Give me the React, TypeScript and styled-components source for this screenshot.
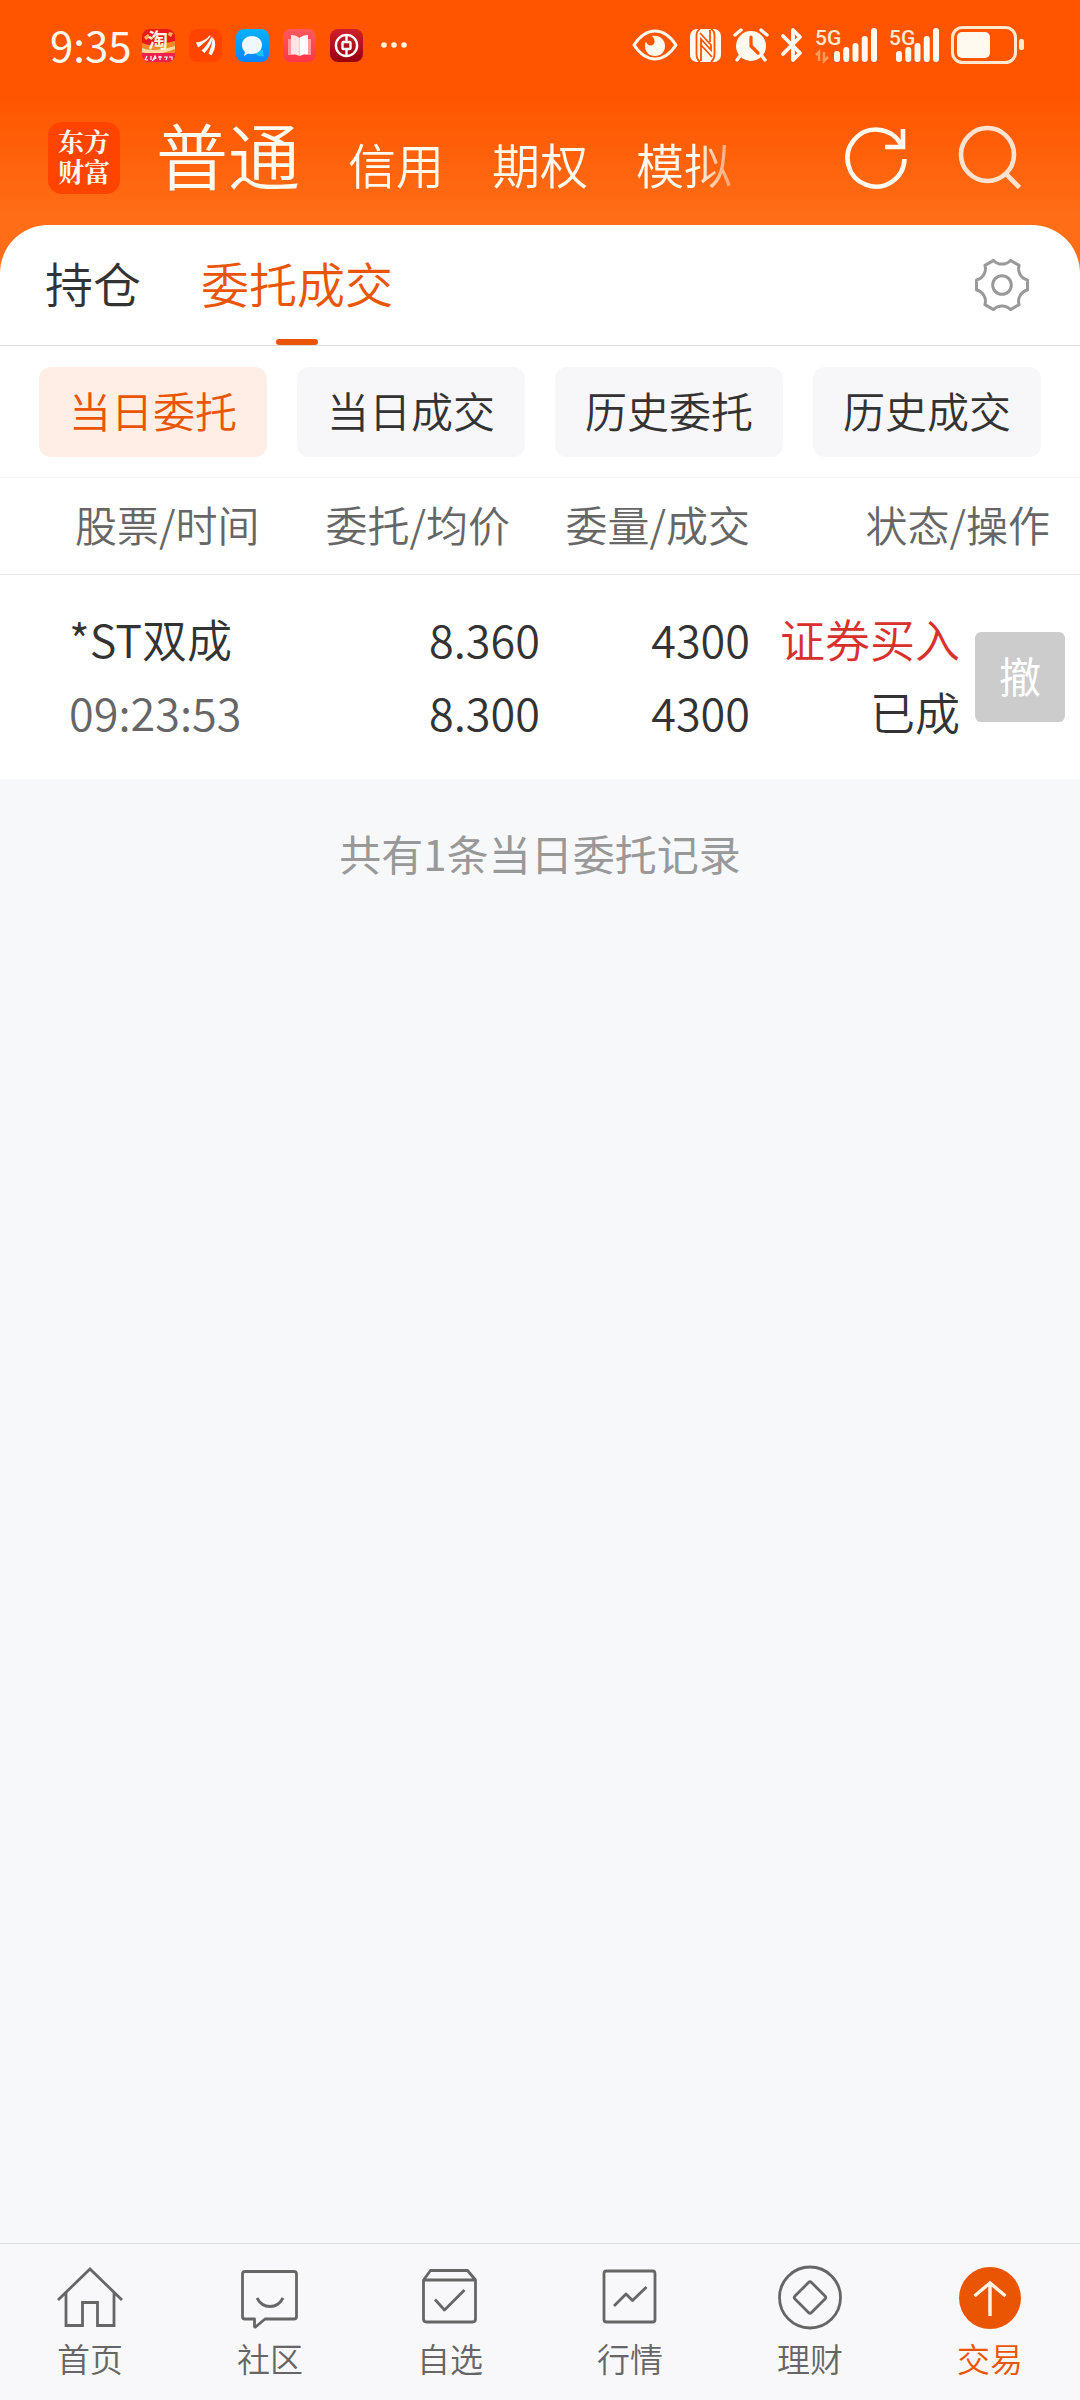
import React from 'react';
import styled, { createGlobalStyle } from 'styled-components';

const color = {
  brand: '#ea5504',
  ink: '#333333',
  sub: '#666666',
  hint: '#999999',
  buy: '#d9302c',
  page: '#f7f8fa',
  chip: '#f7f7fa',
  line: '#dddddd',
};

const GlobalStyle = createGlobalStyle`
  *, *::before, *::after { box-sizing: border-box; }
  body {
    margin: 0;
    background: ${color.page};
    color: ${color.ink};
    font-family: "Noto Sans CJK SC", "Noto Sans", sans-serif;
    font-weight: 350;
  }
  button {
    margin: 0;
    padding: 0;
    border: 0;
    background: none;
    color: inherit;
    font: inherit;
    cursor: pointer;
  }
  a { color: inherit; text-decoration: none; }
  svg { display: block; flex: none; overflow: visible; }
`;

const Shell = styled.div`
  min-height: 100vh;
  display: flex;
  flex-direction: column;
`;

const Hero = styled.header`
  background: linear-gradient(#ff5500 0, #ff5500 96px, #ff6e17 220px);
`;

const StatusBar = styled.div`
  height: 90px;
  padding: 0 56px 0 50px;
  display: flex;
  align-items: center;
  justify-content: space-between;
  color: #fffaf0;
`;

const StatusGroup = styled.div<{ $gap: number }>`
  display: flex;
  align-items: center;
  gap: ${(p) => p.$gap}px;
`;

const Clock = styled.time`
  font-size: 42px;
  line-height: 48px;
  padding-bottom: 3px;
  font-weight: 400;
  margin-right: -4px;
`;

const AccountBar = styled.div`
  height: 135px;
  padding: 0 57px 0 48px;
  display: flex;
  align-items: center;
  color: #fffaf0;
`;

const Logo = styled.a`
  flex: none;
  width: 72px;
  height: 72px;
  margin-right: 36px;
  padding-bottom: 3px;
  border-radius: 14px;
  background: #ff4400;
  display: grid;
  place-content: center;
  text-align: center;
  font-size: 26px;
  line-height: 30px;
  font-weight: 700;
  font-family: "Noto Serif CJK SC", "Noto Sans CJK SC", sans-serif;
`;

const AccountTabs = styled.nav`
  flex: 1;
  display: flex;
  align-items: baseline;
  gap: 48px;
  white-space: nowrap;
  mask-image: linear-gradient(to right, #000 540px, transparent 600px);
`;

const AccountTab = styled.button<{ $active?: boolean }>`
  font-size: ${(p) => (p.$active ? 72 : 48)}px;
  line-height: 72px;
`;

const Actions = styled.div`
  display: flex;
  gap: 48px;
`;

const SectionBar = styled.div`
  height: 121px;
  padding: 0 51px 0 45px;
  display: flex;
  align-items: center;
  background: #ffffff;
  border-radius: 48px 48px 0 0;
  border-bottom: 1px solid ${color.line};
`;

const SectionTabs = styled.nav`
  flex: 1;
  align-self: stretch;
  display: flex;
  gap: 60px;
`;

const SectionTab = styled.button<{ $active?: boolean }>`
  position: relative;
  font-size: 48px;
  line-height: 72px;
  padding-bottom: 6px;
  color: ${(p) => (p.$active ? color.brand : color.ink)};

  &::after {
    content: "";
    display: ${(p) => (p.$active ? 'block' : 'none')};
    position: absolute;
    left: calc(50% - 21px);
    bottom: 0;
    width: 42px;
    height: 6px;
    border-radius: 3px;
    background: ${color.brand};
  }
`;

const Filters = styled.div`
  display: grid;
  grid-template-columns: repeat(4, 1fr);
  gap: 30px;
  padding: 21px 39px 20px;
  background: #ffffff;
  border-bottom: 1px solid #f6f6f6;
`;

const Filter = styled.button<{ $active?: boolean }>`
  height: 90px;
  padding-bottom: 4px;
  border-radius: 12px;
  font-size: 42px;
  line-height: 60px;
  color: ${(p) => (p.$active ? color.brand : color.ink)};
  background: ${(p) => (p.$active ? '#ffeee6' : color.chip)};
`;

const Orders = styled.table`
  width: 100%;
  table-layout: fixed;
  border-collapse: separate;
  border-spacing: 0;
  background: #ffffff;
`;

const HeadCell = styled.th<{ $align?: 'left' | 'right'; $start?: number; $end?: number }>`
  height: 97px;
  padding: 0 ${(p) => p.$end ?? 0}px 4px ${(p) => p.$start ?? 0}px;
  border-bottom: 1px solid #ebebeb;
  text-align: ${(p) => p.$align ?? 'right'};
  font-size: 42px;
  line-height: 60px;
  font-weight: 350;
  color: ${color.sub};
  white-space: nowrap;
`;

const Cell = styled.td<{ $align?: 'left' | 'right'; $start?: number }>`
  height: 204px;
  padding: 0 0 4px ${(p) => p.$start ?? 0}px;
  text-align: ${(p) => p.$align ?? 'right'};
  white-space: nowrap;
`;

const Line = styled.div<{ $color?: string }>`
  font-size: 45px;
  line-height: 73px;
  color: ${(p) => p.$color ?? color.ink};
`;

const ActionCell = styled.td`
  padding: 0 15px;
`;

const CancelButton = styled.button`
  display: block;
  width: 90px;
  height: 90px;
  padding-bottom: 4px;
  border-radius: 6px;
  background: #cccccc;
  color: #ffffff;
  font-size: 42px;
  line-height: 60px;
  font-weight: 400;
`;

const Summary = styled.p`
  margin: 0;
  padding: 44px 0;
  text-align: center;
  font-size: 42px;
  line-height: 60px;
  font-weight: 400;
  color: ${color.hint};
`;

const BottomNav = styled.nav`
  position: sticky;
  bottom: 0;
  margin-top: auto;
  display: grid;
  grid-template-columns: repeat(6, 1fr);
  padding: 21px 0 24px;
  border-top: 1px solid ${color.line};
  background: #f8f8fa;
`;

const NavItem = styled.a<{ $active?: boolean }>`
  display: flex;
  flex-direction: column;
  align-items: center;
  gap: 9px;
  font-size: 33px;
  line-height: 36px;
  color: ${(p) => (p.$active ? color.brand : color.sub)};
`;

/* ---------- status bar drawings ---------- */

const AppIcon = ({ fill, children }: { fill: string; children: React.ReactNode }) => (
  <svg width="33" height="33" viewBox="0 0 33 33" aria-hidden="true">
    <rect width="33" height="33" rx="8" fill={fill} />
    {children}
  </svg>
);

const AppIcons = () => (
  <>
    <svg width="33" height="33" viewBox="0 0 33 33" aria-hidden="true">
      <defs>
        <clipPath id="tile"><rect width="33" height="33" rx="8" /></clipPath>
        <linearGradient id="chat" x1="0" y1="0" x2="0" y2="1">
          <stop offset="0" stopColor="#06b2ff" /><stop offset="1" stopColor="#0a84ff" />
        </linearGradient>
        <linearGradient id="book" x1="0" y1="0" x2="0" y2="1">
          <stop offset="0" stopColor="#ff5a5f" /><stop offset="1" stopColor="#fb3645" />
        </linearGradient>
        <linearGradient id="bank" x1="0" y1="0" x2="0" y2="1">
          <stop offset="0" stopColor="#d0202c" /><stop offset="1" stopColor="#98000e" />
        </linearGradient>
      </defs>
      <g clipPath="url(#tile)">
        <rect width="33" height="33" fill="#ea1a1c" />
        <path d="M0 14q8 3 14 2t19-4v13H0z" fill="#f98a2a" />
        <path d="M0 19q10 5 33-2v3q-20 8-33 3z" fill="#ffd9a0" />
        <path d="M2 8l4-3 2 3-4 3zM27 3l4 1-2 4-3-2z" fill="#ffb45a" />
        <rect y="24" width="33" height="9" fill="#f0204e" />
        <path d="M5 27l-2 4h3M9 27v4M13 27l-2 4 3-2zM16 28h4M18 27v4M22 28h3l-1 3M27 28h3v3" stroke="#fff" strokeWidth="1.2" fill="none" />
      </g>
      <text x="16" y="19" textAnchor="middle" fontSize="20" fontWeight="700" fill="#fff3dc">淘</text>
    </svg>
    <AppIcon fill="#ff4400">
      <path d="M7 13.500q9-1 14-7.500 1 1 0 2-4 5-12 10.500zM12.500 21.500q6-5 10-14 1 2 .5 4-2 7-7.500 12.500zM19.500 24.500q4-8 4-17 6 8-1 19z" fill="#fff" />
    </AppIcon>
    <AppIcon fill="url(#chat)">
      <path d="M20 21h7v3l1 3q-6 1-8-2z" fill="#12c4ff" />
      <path d="M16 7c6 0 10 4 10 9s-4 9-10 9c-2 0-3 0-4-.6L8 27l1-4c-2-2-3-4-3-7 0-5 4-9 10-9z" fill="#eef9ff" />
    </AppIcon>
    <AppIcon fill="url(#book)">
      <path d="M5 10h6v16H5zM22 10h6v16h-6z" fill="#ff9a9c" />
      <path d="M8 6q5 0 8.500 3v18q-4-2-8.500-2z" fill="#ffe4e4" />
      <path d="M25 6q-5 0-8.500 3v18q4-2 8.500-2z" fill="#fff" />
    </AppIcon>
    <AppIcon fill="url(#bank)">
      <g stroke="#fff" fill="none" strokeWidth="2.400">
        <circle cx="16.500" cy="16.500" r="10.600" />
        <rect x="12.500" y="13" width="8" height="7" rx="1" />
        <path d="M16.500 6v7M16.500 20v7" />
      </g>
    </AppIcon>
    <svg width="36" height="6" viewBox="-4 0 36 6" aria-hidden="true">
      <g fill="#fff3e0"><circle cx="3" cy="3" r="2.800" /><circle cx="13" cy="3" r="2.800" /><circle cx="23" cy="3" r="2.800" /></g>
    </svg>
  </>
);

const EyeIcon = () => (
  <svg width="46" height="32" viewBox="0 0 46 32" aria-hidden="true">
    <path d="M2 16C8 7 15 2 23 2s15 5 21 14c-6 9-13 14-21 14S8 25 2 16z" fill="none" stroke="currentColor" strokeWidth="3" strokeLinejoin="round" />
    <path d="M20 7c7-1 13 3 13 10 0 6-4 10-10 10s-10-4-10-10c0-2 .4-3.500 1-4.500 1 3 3 4.500 5.500 4 4-1 4-6 .5-9.500z" fill="currentColor" />
  </svg>
);

const NfcIcon = () => (
  <svg width="31" height="33" viewBox="0 0 31 33" aria-hidden="true">
    <rect width="31" height="33" rx="7" fill="currentColor" />
    <g fill="none" stroke="#ff5500" strokeWidth="1.800">
      <path d="M10 0Q6 2 6.500 8v17q0 5 3.500 8" />
      <path d="M21 0q4 2 3.500 8v17q0 5-3.500 8" />
      <path d="M11 32V10l10 11v-5L10 4M20 1v12" />
      <path d="M11 16l11 12" />
    </g>
  </svg>
);

const AlarmIcon = () => (
  <svg width="36" height="34" viewBox="0 0 36 34" aria-hidden="true">
    <circle cx="18" cy="18" r="15" fill="currentColor" />
    <path d="M2 7l6-5M34 7l-6-5M7 28l-3 4M29 28l3 4" stroke="currentColor" strokeWidth="3.400" strokeLinecap="round" />
    <path d="M18 9v9l7 7" stroke="#ff5500" strokeWidth="3.200" fill="none" strokeLinecap="round" />
  </svg>
);

const BluetoothIcon = () => (
  <svg width="22" height="36" viewBox="0 0 22 36" aria-hidden="true">
    <path d="M2 9l17 17-7 7V3l7 7L2 27" fill="none" stroke="currentColor" strokeWidth="3.800" strokeLinejoin="round" strokeLinecap="round" />
  </svg>
);

const barHeights = [11, 15, 19, 26, 34];

const SignalIcon = ({ width, traffic }: { width: number; traffic?: boolean }) => (
  <svg width={width} height="36" viewBox={`0 0 ${width} 36`} role="img" aria-label="5G">
    <text x="0" y="18" fontFamily="Roboto, sans-serif" fontSize="21" fontWeight="500" fill="#ffe9d0">5G</text>
    {traffic && <path d="M4 34V25l-3 3M9 25v9l4-4" stroke="#ff9a5c" strokeWidth="2.500" fill="none" />}
    {barHeights.map((h, i) => (
      <rect key={h} x={width - 43 + i * 9.250} y={35 - h} width="6" height={h} rx="3" fill="currentColor" />
    ))}
  </svg>
);

const BatteryIcon = () => (
  <svg width="73" height="38" viewBox="0 0 73 38" aria-hidden="true">
    <rect x="1.500" y="1.500" width="63" height="35" rx="10" fill="none" stroke="#ffe9d0" strokeWidth="3" />
    <rect x="6" y="6" width="33" height="26" rx="5" fill="currentColor" />
    <rect x="68" y="13" width="5" height="11" rx="2" fill="#ffe9d0" />
  </svg>
);

/* ---------- toolbar drawings ---------- */

const RefreshIcon = () => (
  <svg width="66" height="66" viewBox="0 0 66 66" fill="none" stroke="currentColor" strokeWidth="4.600" aria-hidden="true">
    <path d="M61.500 34A28.500 28.500 0 1 1 57.500 18.500L60 22" />
    <path d="M60 4v18H42" />
  </svg>
);

const SearchIcon = () => (
  <svg width="66" height="66" viewBox="0 0 66 66" fill="none" stroke="#ffe3d0" strokeWidth="4.600" aria-hidden="true">
    <circle cx="30.500" cy="29.500" r="26.500" />
    <path d="M48.500 48.500l14 14" />
  </svg>
);

const gearPath = (() => {
  const spot = (x: number, y: number, turn: number) => {
    const c = Math.cos(turn);
    const s = Math.sin(turn);
    return `${(27 + x * c - y * s).toFixed(2)} ${(27 + x * s + y * c).toFixed(2)}`;
  };
  let d = '';
  for (let i = 0; i < 6; i += 1) {
    const turn = (i * Math.PI) / 3;
    d += `${i === 0 ? 'M' : 'A11.5 11.5 0 0 0 '}${spot(25.5, -5, turn)}L${spot(25.5, 5, turn)}`;
  }
  return `${d}A11.5 11.5 0 0 0 ${spot(25.5, -5, 0)}Z`;
})();

const GearIcon = () => (
  <svg width="54" height="54" viewBox="0 0 54 54" fill="none" stroke={color.hint} strokeWidth="3" strokeLinejoin="round" aria-hidden="true">
    <path d={gearPath} />
    <circle cx="27" cy="27" r="9.300" />
  </svg>
);

/* ---------- bottom navigation drawings ---------- */

const NavIcon = ({ children }: { children: React.ReactNode }) => (
  <svg width="66" height="66" viewBox="0 0 66 66" fill="none" stroke="currentColor" strokeWidth="2.800" strokeLinejoin="round" aria-hidden="true">
    {children}
  </svg>
);

const navItems = [
  {
    label: '首页',
    icon: <path d="M1 35L33 4l32 31M9 28v32.500h16.500V37.500h15v23H57V28" strokeLinejoin="miter" />,
  },
  {
    label: '社区',
    icon: (
      <>
        <path d="M8 6.500h49q2.500 0 2.500 2.500v42.500q0 2.500-2.500 2.500H28l-9.500 8q-1 .5-1-1V54H8q-2.500 0-2.500-2.500V9q0-2.500 2.500-2.500z" />
        <path d="M20 33q4.500 8.500 13 8.500T46 33" />
      </>
    ),
  },
  {
    label: '自选',
    icon: (
      <>
        <path d="M6.500 15l7-9.500h37l8 9.500v39q0 3-3 3h-46q-3 0-3-3zM6.500 15h52" />
        <path d="M18 34.500L27.500 45 47.500 25" />
      </>
    ),
  },
  {
    label: '行情',
    icon: (
      <>
        <rect x="7" y="6" width="51" height="51" rx="2.500" />
        <path d="M17 41l12-12 6.500 6.500L49.500 22" />
      </>
    ),
  },
  {
    label: '理财',
    icon: (
      <>
        <circle cx="33" cy="32.500" r="30.500" />
        <path d="M31.500 17.500q1.500-1.500 3 0l13.500 13.500q1.500 1.500 0 3L34.500 47.500q-1.500 1.500-3 0L18 34q-1.500-1.500 0-3z" />
      </>
    ),
  },
  {
    label: '交易',
    active: true,
    icon: (
      <>
        <circle cx="33" cy="33" r="31" fill={color.brand} stroke="none" />
        <path d="M17.500 31L33 18l15.500 13M33 18v33" stroke="#fff4e4" strokeWidth="3.400" strokeLinejoin="miter" />
      </>
    ),
  },
];

const accounts = ['普通', '信用', '期权', '模拟'];
const sections = ['持仓', '委托成交'];
const filters = ['当日委托', '当日成交', '历史委托', '历史成交'];

const orders = [
  {
    name: '*ST双成',
    time: '09:23:53',
    price: '8.360',
    average: '8.300',
    amount: '4300',
    filled: '4300',
    side: '证券买入',
    status: '已成',
  },
];

export default function App() {
  return (
    <>
      <GlobalStyle />
      <Shell>
        <Hero>
          <StatusBar>
            <StatusGroup $gap={14}>
              <Clock>9:35</Clock>
              <AppIcons />
            </StatusGroup>
            <StatusGroup $gap={12}>
              <EyeIcon />
              <NfcIcon />
              <AlarmIcon />
              <BluetoothIcon />
              <SignalIcon width={62} traffic />
              <SignalIcon width={50} />
              <BatteryIcon />
            </StatusGroup>
          </StatusBar>
          <AccountBar>
            <Logo href="#home">东方<br />财富</Logo>
            <AccountTabs>
              {accounts.map((name, i) => (
                <AccountTab key={name} type="button" $active={i === 0}>{name}</AccountTab>
              ))}
            </AccountTabs>
            <Actions>
              <button type="button" aria-label="刷新"><RefreshIcon /></button>
              <button type="button" aria-label="搜索"><SearchIcon /></button>
            </Actions>
          </AccountBar>
          <SectionBar>
            <SectionTabs>
              {sections.map((name, i) => (
                <SectionTab key={name} type="button" $active={i === 1}>{name}</SectionTab>
              ))}
            </SectionTabs>
            <button type="button" aria-label="设置"><GearIcon /></button>
          </SectionBar>
        </Hero>

        <main>
          <Filters>
            {filters.map((name, i) => (
              <Filter key={name} type="button" $active={i === 0}>{name}</Filter>
            ))}
          </Filters>
          <Orders>
            <colgroup>
              <col />
              <col width="240" />
              <col width="210" />
              <col width="210" />
              <col width="120" />
            </colgroup>
            <thead>
              <tr>
                <HeadCell scope="col" $align="left" $start={75}>股票/时间</HeadCell>
                <HeadCell scope="col" $end={30}>委托/均价</HeadCell>
                <HeadCell scope="col">委量/成交</HeadCell>
                <HeadCell scope="col" colSpan={2} $end={30}>状态/操作</HeadCell>
              </tr>
            </thead>
            <tbody>
              {orders.map((order) => (
                <tr key={order.time}>
                  <Cell $align="left" $start={69}>
                    <Line>{order.name}</Line>
                    <Line $color={color.sub}>{order.time}</Line>
                  </Cell>
                  <Cell>
                    <Line>{order.price}</Line>
                    <Line>{order.average}</Line>
                  </Cell>
                  <Cell>
                    <Line>{order.amount}</Line>
                    <Line>{order.filled}</Line>
                  </Cell>
                  <Cell>
                    <Line $color={color.buy}>{order.side}</Line>
                    <Line>{order.status}</Line>
                  </Cell>
                  <ActionCell>
                    <CancelButton type="button" disabled>撤</CancelButton>
                  </ActionCell>
                </tr>
              ))}
            </tbody>
          </Orders>
          <Summary>共有{orders.length}条当日委托记录</Summary>
        </main>

        <BottomNav>
          {navItems.map((item) => (
            <NavItem key={item.label} href={`#${item.label}`} $active={item.active}>
              <NavIcon>{item.icon}</NavIcon>
              {item.label}
            </NavItem>
          ))}
        </BottomNav>
      </Shell>
    </>
  );
}
